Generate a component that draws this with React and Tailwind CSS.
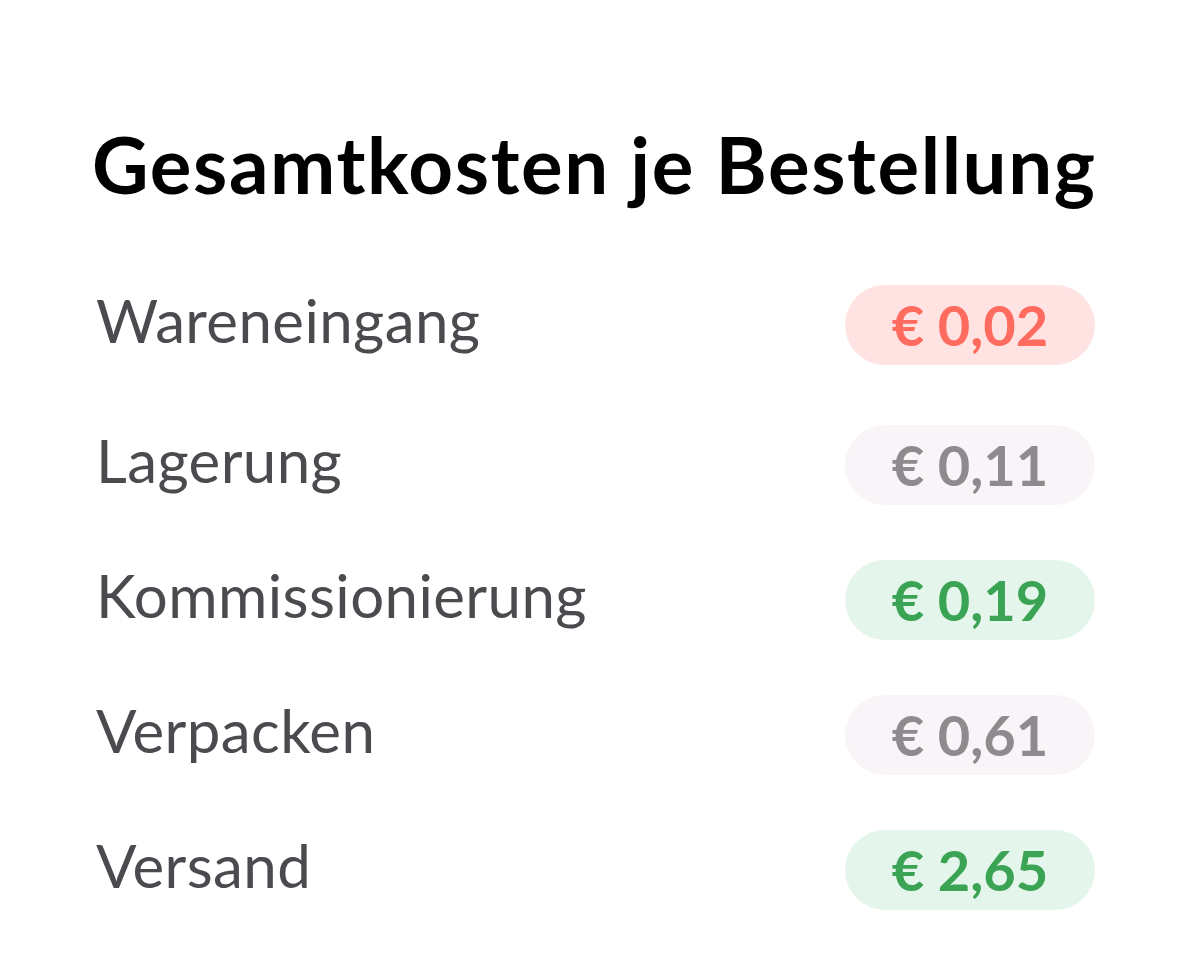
import React from 'react';

const rows = [
  { label: 'Wareneingang', value: '€ 0,02', tone: 'red' },
  { label: 'Lagerung', value: '€ 0,11', tone: 'gray' },
  { label: 'Kommissionierung', value: '€ 0,19', tone: 'green' },
  { label: 'Verpacken', value: '€ 0,61', tone: 'gray' },
  { label: 'Versand', value: '€ 2,65', tone: 'green' },
];

const tones = {
  red: 'bg-[#ffe3e2] text-[#ff6b5e]',
  gray: 'bg-[#f8f4f7] text-[#8f8a8e]',
  green: 'bg-[#e4f5eb] text-[#3ba454]',
};

const App = () => {
  return (
    <div className="min-h-screen bg-white font-['Lato','Liberation_Sans',sans-serif]">
      <div className="w-[1003px] ml-[92px] pt-[118px]">
        {/* Title */}
        <h1 className="text-[78px] leading-[92px] font-bold tracking-[1.6px] text-black whitespace-nowrap">Gesamtkosten je Bestellung</h1>

        {/* Cost rows */}
        <div className="mt-[75px] flex flex-col gap-[55px]">
          {rows.map((row, i) => (
            <div key={row.label} className={`flex items-center justify-between h-[80px] ${i === 0 ? 'mb-[5px]' : ''}`}>
              <span className="ml-[4px] text-[60px] leading-none text-[#4a4a4f] -mt-[10px] tracking-[0.4px]">{row.label}</span>
              <span className={`w-[250px] h-[80px] rounded-full flex items-center justify-center text-[56px] font-bold ${tones[row.tone]}`}>
                {row.value}
              </span>
            </div>
          ))}
        </div>
      </div>
    </div>
  );
};

export default App;
